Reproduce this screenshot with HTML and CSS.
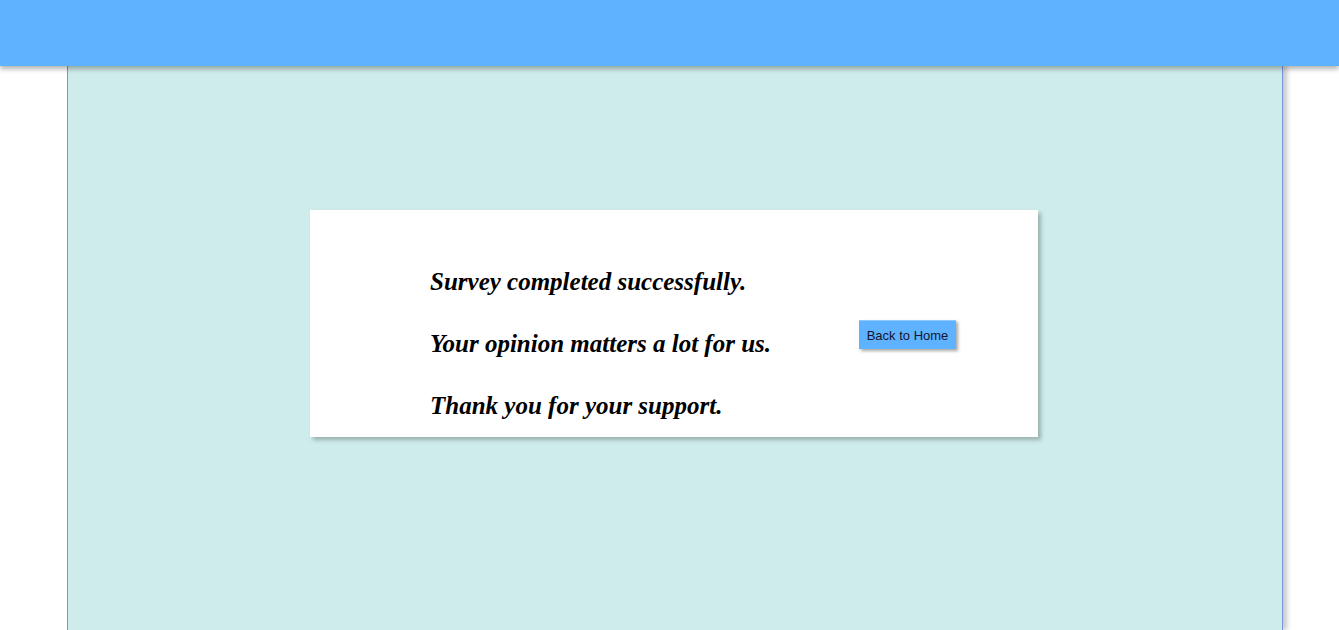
FILE: index.html
```html
<!DOCTYPE html>
<html>
<head>
<meta charset="utf-8">
<link rel="stylesheet" href="styles.css">
</head>
<body>
<header class="topbar"></header>
<main class="page">
  <section class="card">
    <div class="messages">
      <p class="msg">Survey completed successfully.</p>
      <p class="msg">Your opinion matters a lot for us.</p>
      <p class="msg">Thank you for your support.</p>
    </div>
    <div class="actions">
      <button class="home-btn" type="button">Back to Home</button>
    </div>
  </section>
</main>
</body>
</html>
```
FILE: styles.css
```css
html, body {
  margin: 0;
  padding: 0;
  height: 100%;
  background: #ffffff;
  overflow: hidden;
}
body {
  display: flex;
  flex-direction: column;
}
.topbar {
  position: relative;
  z-index: 2;
  height: 66px;
  flex: 0 0 66px;
  background: #5eb2ff;
  box-shadow: 0 3px 5px rgba(0, 0, 0, 0.3);
}
.page {
  flex: 1 0 auto;
  width: 1214px;
  margin-left: 67px;
  background: #ceeceb;
  border-left: 1px solid #7d93e0;
  border-right: 1px solid #7d93e0;
  box-shadow: 4px 0 5px rgba(0, 0, 0, 0.22);
  padding-top: 144px;
  box-sizing: content-box;
}
.card {
  width: 728px;
  height: 227px;
  margin-left: 242px;
  background: #ffffff;
  box-shadow: 3px 3px 4px rgba(0, 0, 0, 0.25);
  display: flex;
  box-sizing: border-box;
  padding-left: 120px;
}
.messages {
  width: 429px;
  padding-top: 57px;
}
.msg {
  margin: 0 0 33px 0;
  font-family: "Liberation Serif", "Times New Roman", serif;
  font-weight: bold;
  font-style: italic;
  font-size: 25px;
  line-height: 29px;
  color: #000000;
  white-space: nowrap;
}
.actions {
  padding-top: 110px;
}
.home-btn {
  width: 97px;
  height: 29px;
  padding: 0;
  border: none;
  border-top: 1px solid #8ec8ff;
  background: #5eb2ff;
  color: #14142e;
  font-family: "Liberation Sans", Arial, sans-serif;
  font-size: 13px;
  box-shadow: 2px 2px 3px rgba(0, 0, 0, 0.35);
}
```
